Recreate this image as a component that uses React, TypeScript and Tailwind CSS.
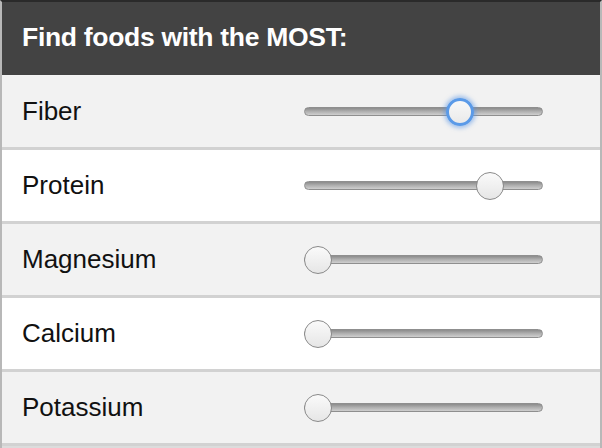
import React from "react";

const rows = [
  { label: "Fiber", value: 0.672, focused: true, bg: "bg-[#f2f2f2]" },
  { label: "Protein", value: 0.815, focused: false, bg: "bg-white" },
  { label: "Magnesium", value: 0, focused: false, bg: "bg-[#f2f2f2]" },
  { label: "Calcium", value: 0, focused: false, bg: "bg-white" },
  { label: "Potassium", value: 0, focused: false, bg: "bg-[#f2f2f2]" },
];

function Slider({ value, focused }: { value: number; focused: boolean }) {
  const thumbLeft = value * (239 - 28);
  return (
    <div className="relative w-[239px] h-[30px] flex items-center">
      <div className="w-full h-[9px] rounded-full border border-[#8f8f8f] bg-gradient-to-b from-[#8c8c8c] via-[#b0b0b0] to-[#cfcfcf]" />
      <div
        className={
          focused
            ? "absolute top-[1px] w-[28px] h-[28px] rounded-full border-[3px] border-[#5a9ae8] bg-gradient-to-b from-[#f8f8f8] to-[#eaeaea] shadow-[0_0_4px_2px_rgba(90,150,230,0.55)]"
            : "absolute top-[1px] w-[28px] h-[28px] rounded-full border-[1.5px] border-[#8a8a8a] bg-gradient-to-b from-[#fafafa] to-[#e6e6e6]"
        }
        style={{ left: thumbLeft }}
      />
    </div>
  );
}

export default function App() {
  return (
    <div
      className="w-[602px] h-[448px] bg-[#dcdcdc] border-t-2 border-t-[#2a2a2a] border-l-2 border-l-[#b8b8b8] border-r-2 border-r-[#b8b8b8] overflow-hidden"
      style={{ fontFamily: '"Liberation Sans", Arial, sans-serif' }}
    >
      <div className="h-[73px] bg-[#434343] flex items-center pl-[20px] pb-[2px]">
        <span className="text-white font-bold text-[26.5px] leading-none tracking-[-0.3px]">Find foods with the MOST:</span>
      </div>
      <div className="h-[1px] bg-[#f4f4f4]" />
      {rows.map((r) => (
        <div key={r.label} className={`h-[74px] border-b-[3px] border-[#d2d2d2] ${r.bg} flex items-center`}>
          <div className="w-[302px] pl-[20px] text-[26px] text-[#111] leading-none pb-[2px]">{r.label}</div>
          <Slider value={r.value} focused={r.focused} />
        </div>
      ))}
    </div>
  );
}
